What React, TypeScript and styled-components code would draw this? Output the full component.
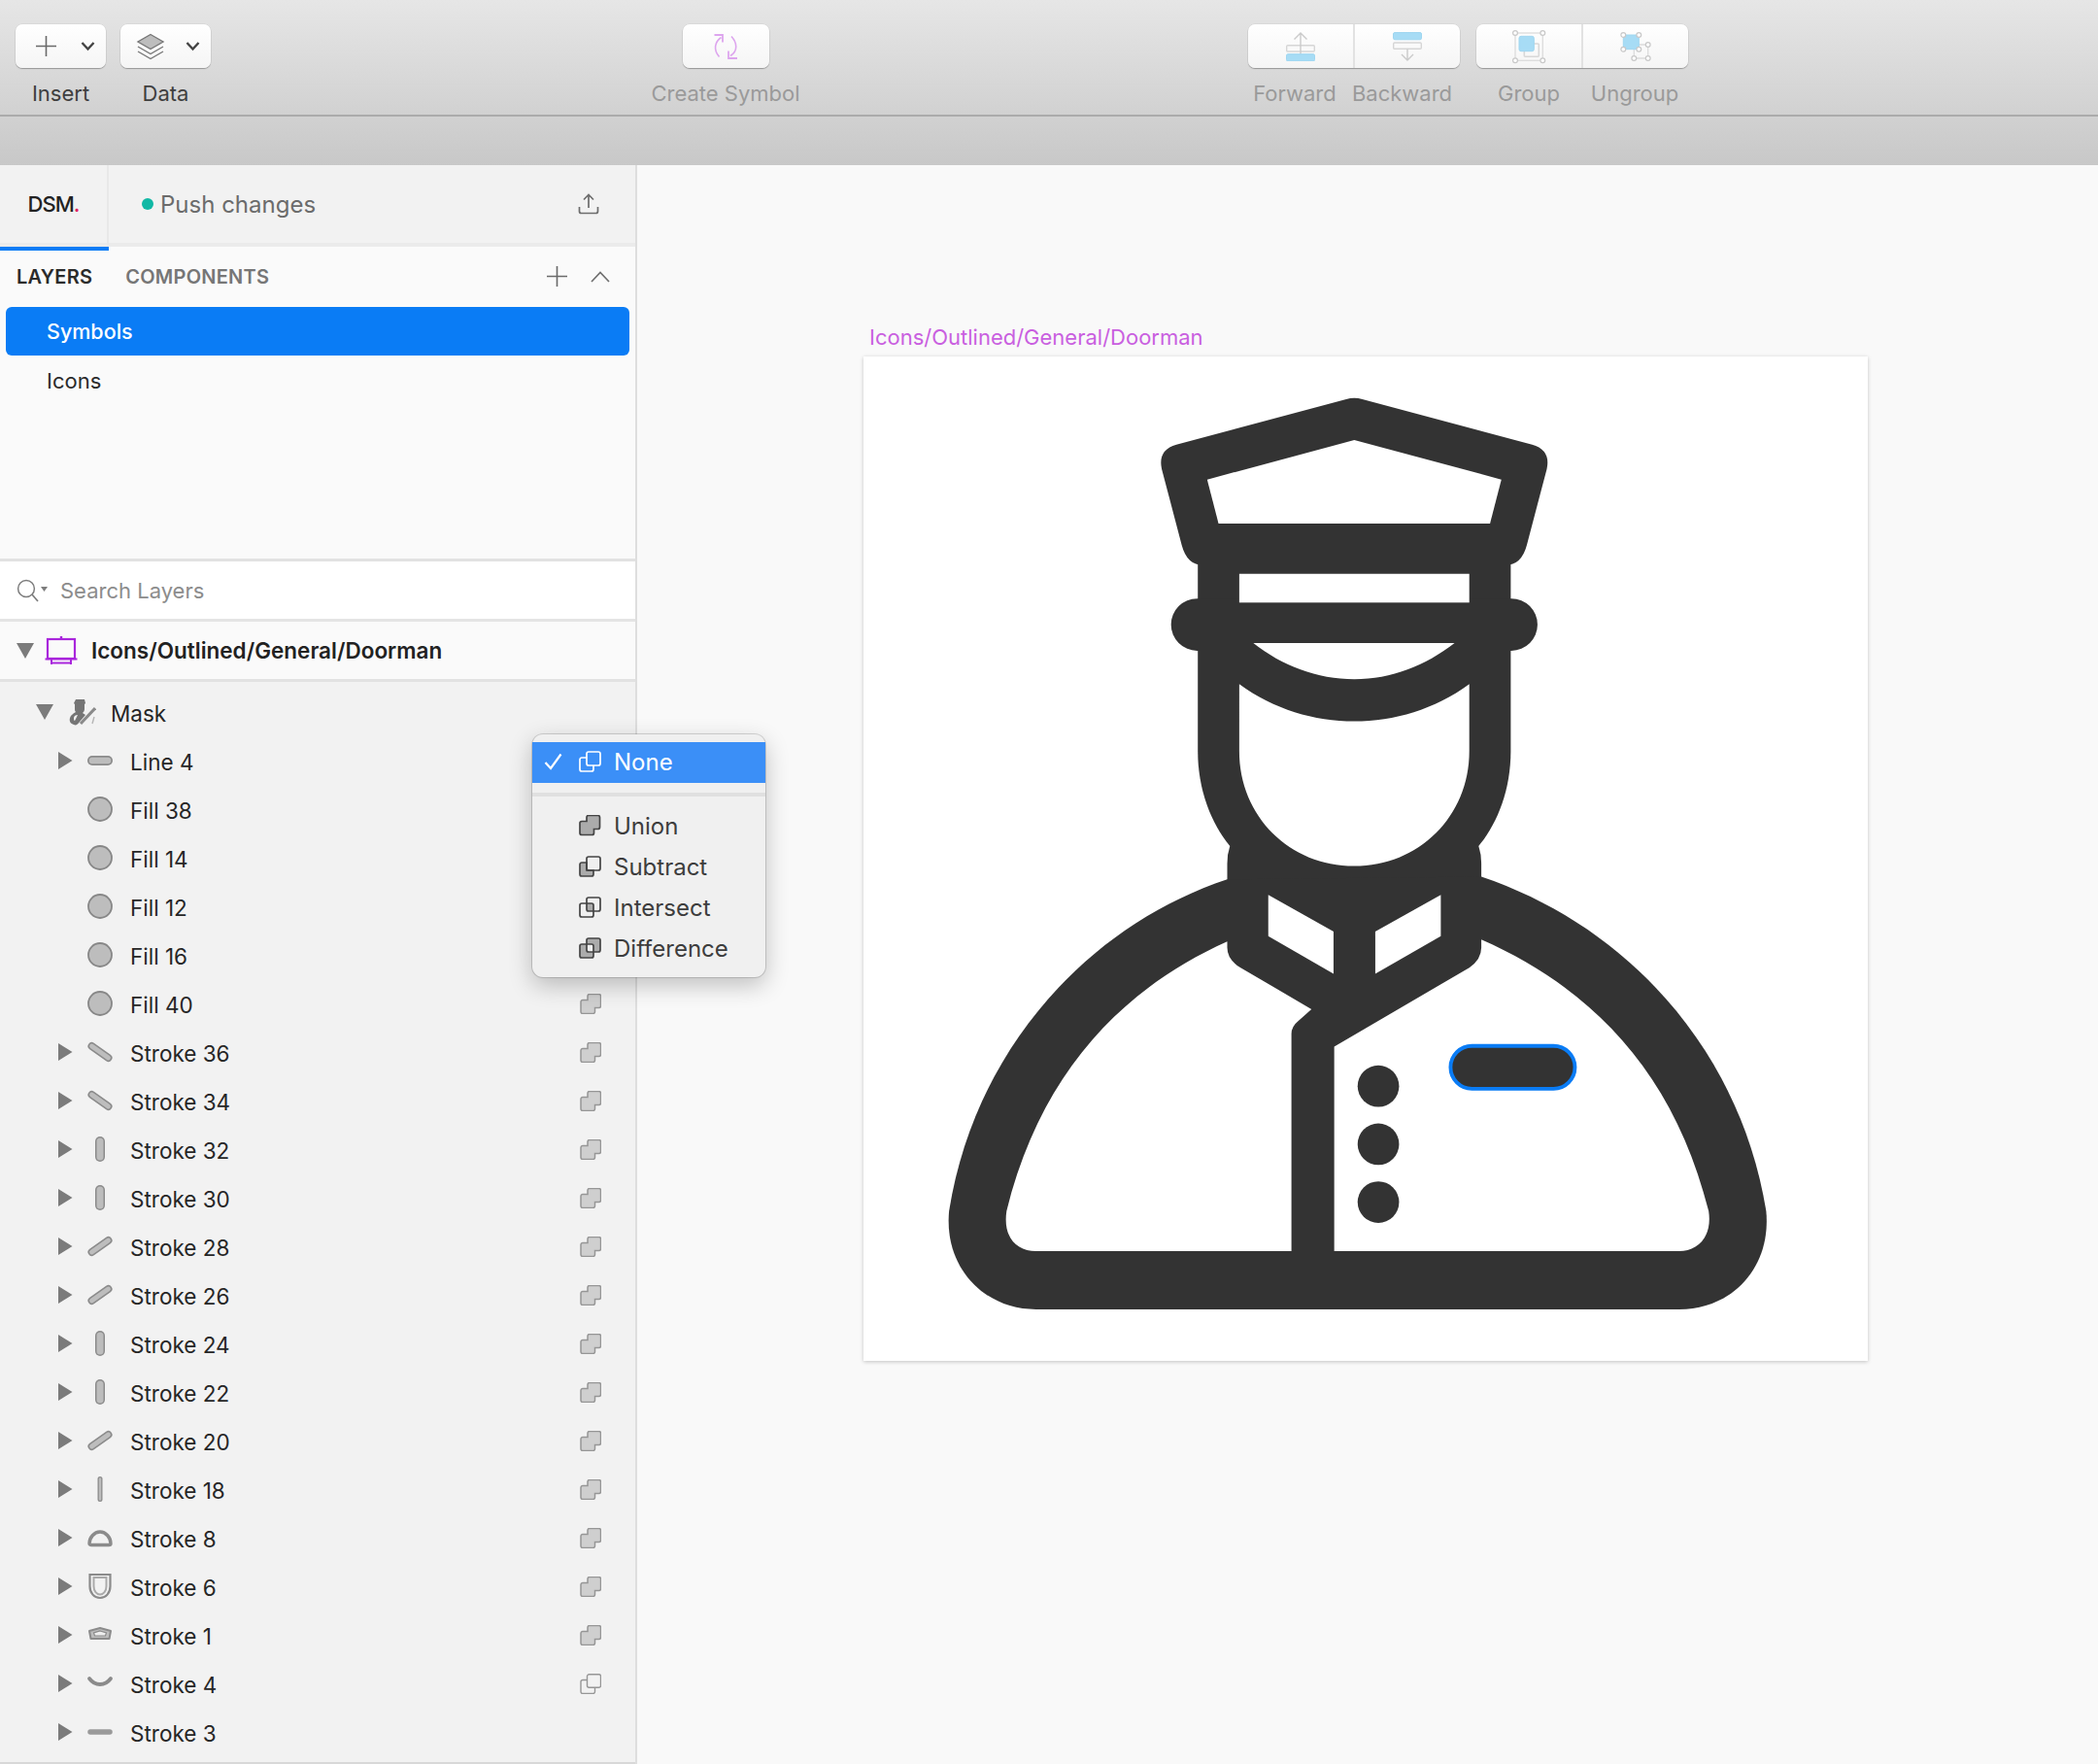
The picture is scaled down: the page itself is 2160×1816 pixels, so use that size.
import React from "react";
import styled, { createGlobalStyle } from "styled-components";

const GlobalStyle = createGlobalStyle`
  html, body {
    margin: 0;
    padding: 0;
    background: #f9f9f9;
    font-family: "Inter", "Liberation Sans", sans-serif;
  }
  * { box-sizing: border-box; }
`;

type Thumb =
  | "bar" | "circle" | "down" | "up" | "vert" | "thin"
  | "dome" | "shield" | "hat" | "smile" | "dash";
type Bool = "union" | "none" | "off";

type Layer = { name: string; thumb: Thumb; bool: Bool; arrow: boolean };

const s = (name: string, thumb: Thumb, bool: Bool = "union"): Layer => ({ name, thumb, bool, arrow: true });
const f = (name: string): Layer => ({ name, thumb: "circle", bool: "union", arrow: false });

const layers: Layer[] = [
  s("Line 4", "bar"),
  f("Fill 38"),
  f("Fill 14"),
  f("Fill 12"),
  f("Fill 16"),
  f("Fill 40"),
  s("Stroke 36", "down"),
  s("Stroke 34", "down"),
  s("Stroke 32", "vert"),
  s("Stroke 30", "vert"),
  s("Stroke 28", "up"),
  s("Stroke 26", "up"),
  s("Stroke 24", "vert"),
  s("Stroke 22", "vert"),
  s("Stroke 20", "up"),
  s("Stroke 18", "thin"),
  s("Stroke 8", "dome"),
  s("Stroke 6", "shield"),
  s("Stroke 1", "hat"),
  s("Stroke 4", "smile", "none"),
  s("Stroke 3", "dash", "off"),
];

const Page = styled.div`
  position: relative;
  width: 2160px;
  height: 1816px;
  overflow: hidden;
  display: flex;
  flex-direction: column;
`;

const TopBar = styled.header`
  height: 170px;
  flex: none;
  background: linear-gradient(#e6e6e6, #c8c8c8);
`;

const ToolRow = styled.div`
  height: 120px;
  border-bottom: 2px solid #ababab;
  display: flex;
  align-items: flex-start;
  padding-top: 25px;
`;

const Tool = styled.div<{ $left: number }>`
  margin-left: ${(p) => p.$left}px;
  display: flex;
  flex-direction: column;
  align-items: center;
`;

const ButtonGroup = styled.div<{ $w: number }>`
  width: ${(p) => p.$w}px;
  height: 45px;
  flex: none;
  display: flex;
  border-radius: 7px;
  background: linear-gradient(#ffffff, #f5f5f5);
  box-shadow: 0 1px 1px rgba(0, 0, 0, 0.28), 0 0 0 0.5px rgba(0, 0, 0, 0.08);
  overflow: hidden;
`;

const ButtonCell = styled.div<{ $divider?: boolean; $pad?: number }>`
  flex: 1;
  display: flex;
  align-items: center;
  justify-content: ${(p) => (p.$pad ? "space-between" : "center")};
  padding: 0 ${(p) => (p.$pad ? "11px" : "0")} 0 ${(p) => p.$pad ?? 0}px;
  border-left: ${(p) => (p.$divider ? "2px solid #e2e2e2" : "none")};
`;

const ToolLabels = styled.div<{ $split?: boolean }>`
  display: flex;
  height: 52px;
  flex: none;
  align-items: center;
  justify-content: ${(p) => (p.$split ? "flex-start" : "center")};
  width: ${(p) => (p.$split ? "100%" : "auto")};
`;

const ToolLabel = styled.span<{ $dim?: boolean; $w?: number }>`
  font-size: 22px;
  line-height: 52px;
  white-space: nowrap;
  text-align: center;
  flex: none;
  width: ${(p) => (p.$w ? `${p.$w}px` : "auto")};
  color: ${(p) => (p.$dim ? "#9a9a9a" : "#3f3f3f")};
`;

const Body = styled.div`
  flex: 1;
  display: flex;
  min-height: 0;
`;

const Sidebar = styled.aside`
  width: 656px;
  flex: none;
  display: flex;
  flex-direction: column;
  border-right: 2px solid #dedede;
  background: #f2f2f2;
`;

const DsmBar = styled.div`
  height: 88px;
  flex: none;
  display: flex;
  background: #f2f2f2;
  border-bottom: 4px solid #fafafa;
  box-shadow: inset 0 -4px 0 #ebebeb;
`;

const DsmTab = styled.div`
  position: relative;
  width: 112px;
  height: 84px;
  flex: none;
  display: flex;
  align-items: center;
  justify-content: center;
  border-right: 2px solid #e8e8e8;
  font-size: 22px;
  font-weight: 500;
  letter-spacing: -1px;
  color: #222;
  padding-bottom: 4px;
  &::after {
    content: "";
    position: absolute;
    left: 0;
    right: -2px;
    bottom: -4px;
    height: 4px;
    background: #0a7cf5;
  }
`;

const RedDot = styled.span`
  color: #e0245e;
`;

const PushRow = styled.div`
  flex: 1;
  display: flex;
  align-items: center;
  padding: 0 37px 4px 34px;
  color: #6b6b6b;
  font-size: 24px;
`;

const StatusDot = styled.span`
  width: 12px;
  height: 12px;
  border-radius: 50%;
  background: #11b8a5;
  margin-right: 7px;
`;

const PushLabel = styled.span`
  flex: 1;
`;

const LayersPane = styled.section`
  height: 320px;
  flex: none;
  background: #fafafa;
  border-bottom: 3px solid #e2e2e2;
`;

const TabRow = styled.div`
  height: 58px;
  display: flex;
  align-items: center;
  padding: 0 26px 5px 17px;
`;

const PaneTab = styled.span<{ $active?: boolean }>`
  font-size: 20px;
  font-weight: 600;
  letter-spacing: 0.25px;
  color: ${(p) => (p.$active ? "#2b2b2b" : "#767676")};
  margin-right: 34px;
`;

const TabActions = styled.div`
  margin-left: auto;
  display: flex;
  align-items: center;
  gap: 23px;
`;

const PageRow = styled.div<{ $active?: boolean }>`
  height: 50px;
  margin: 0 6px;
  padding: ${(p) => (p.$active ? 0 : 2)}px 0 0 42px;
  display: flex;
  align-items: center;
  border-radius: 6px;
  font-size: ${(p) => (p.$active ? 21.5 : 22)}px;
  font-weight: ${(p) => (p.$active ? 500 : 400)};
  color: ${(p) => (p.$active ? "#fff" : "#2b2b2b")};
  background: ${(p) => (p.$active ? "#0a7cf5" : "transparent")};
`;

const SearchRow = styled.div`
  height: 62px;
  flex: none;
  display: flex;
  align-items: center;
  gap: 11px;
  padding-left: 17px;
  background: #fff;
  border-bottom: 3px solid #e4e4e4;
  font-size: 22px;
  color: #8c8c8c;
`;

const ArtboardRow = styled.div`
  height: 62px;
  flex: none;
  display: flex;
  align-items: center;
  padding-left: 17px;
  background: #fafafa;
  border-bottom: 3px solid #e2e2e2;
  font-size: 22.5px;
  font-weight: 600;
  color: #222;
`;

const LayerList = styled.div`
  flex: 1;
  padding-top: 7px;
  border-bottom: 2px solid #d8d8d8;
  min-height: 0;
  overflow: hidden;
`;

const LayerRow = styled.div<{ $indent: number }>`
  height: 50px;
  display: flex;
  align-items: center;
  padding-left: ${(p) => p.$indent}px;
  padding-right: 35px;
  font-size: 22.5px;
  color: #262626;
`;

const Toggle = styled.span<{ $w: number }>`
  width: ${(p) => p.$w}px;
  flex: none;
  display: flex;
  align-items: center;
  margin-bottom: 2px;
`;

const ThumbSlot = styled.span`
  width: 40px;
  flex: none;
  display: flex;
  align-items: center;
  justify-content: center;
  margin-bottom: 2px;
`;

const LayerName = styled.span<{ $gap: number }>`
  flex: 1;
  margin-left: ${(p) => p.$gap}px;
`;

const BoolSlot = styled.span`
  display: flex;
  margin-bottom: 2px;
`;

const Canvas = styled.main`
  flex: 1;
  background: #f9f9f9;
  padding: 164px 0 0 233px;
`;

const ArtboardTitle = styled.div`
  height: 28px;
  margin: 0 0 5px 6px;
  line-height: 26px;
  font-size: 22px;
  color: #c95fe0;
`;

const Artboard = styled.div`
  width: 1034px;
  height: 1034px;
  background: #fff;
  box-shadow: 0 1px 4px rgba(0, 0, 0, 0.22);
`;

const Menu = styled.div`
  position: absolute;
  left: 548px;
  top: 756px;
  width: 240px;
  height: 250px;
  padding-top: 8px;
  border-radius: 11px;
  background: #f0f0f0;
  box-shadow: 0 0 0 1px rgba(0, 0, 0, 0.14), 0 8px 24px rgba(0, 0, 0, 0.24);
`;

const MenuItem = styled.div<{ $active?: boolean }>`
  height: 42px;
  display: flex;
  align-items: center;
  padding-left: 12px;
  padding-bottom: ${(p) => (p.$active ? 2 : 0)}px;
  font-size: 24px;
  color: ${(p) => (p.$active ? "#fff" : "#3d3d3d")};
  background: ${(p) => (p.$active ? "#3b8ff7" : "transparent")};
`;

const MenuCheck = styled.span`
  width: 36px;
  flex: none;
  display: flex;
  align-items: center;
`;

const MenuName = styled.span`
  margin-left: 13px;
`;

const MenuSeparator = styled.div`
  height: 4px;
  margin: 10px 0 9px;
  background: #e0e0e0;
`;

const ArtboardGlyph = styled.svg`
  width: 34px;
  height: 30px;
  flex: none;
  margin: 0 14px 0 11px;
`;

const Triangle = ({ open }: { open?: boolean }) => (
  <svg width="18" height="18" viewBox="0 0 18 18">
    {open ? <path d="M0 1h18L9 17z" fill="#7b7b7b" /> : <path d="M1 0l14.5 9L1 18z" fill="#7b7b7b" />}
  </svg>
);

const Plus = ({ size = 23 }: { size?: number }) => (
  <svg width={size} height={size} viewBox="0 0 23 23">
    <path d="M11.5 1v21M1 11.5h21" stroke="#6a6a6a" strokeWidth="1.6" fill="none" />
  </svg>
);

const ChevronDown = () => (
  <svg width="15" height="11" viewBox="0 0 15 11">
    <path d="M1.5 2l6 6.5 6-6.5" stroke="#444" strokeWidth="2.4" fill="none" />
  </svg>
);

const LayersIcon = () => (
  <svg width="30" height="28" viewBox="0 0 30 28">
    <path d="M15 1.5l13 7.5-13 7.5L2 9z" fill="#bdbdbd" stroke="#777" strokeWidth="1.4" />
    <path d="M2 14l13 7.5L28 14M2 19l13 7.5L28 19" fill="none" stroke="#777" strokeWidth="1.4" />
  </svg>
);

const SymbolIcon = () => (
  <svg width="26" height="26" viewBox="0 0 26 26">
    <path d="M8.5 3.5C2 8 0 16 6.5 23.5" fill="none" stroke="#dda5ee" strokeWidth="1.6" />
    <path d="M19 2.5C25 9 26 17 18 22.5" fill="none" stroke="#dda5ee" strokeWidth="1.6" />
    <path d="M1.5 1h8.5v7.5" fill="none" stroke="#dda5ee" strokeWidth="1.8" />
    <path d="M25 25h-9v-7.500" fill="none" stroke="#dda5ee" strokeWidth="1.8" />
  </svg>
);

const Arrange = ({ forward }: { forward?: boolean }) => (
  <svg width="30" height="30" viewBox="0 0 30 30">
    {forward ? (
      <>
        <rect x="0.7" y="13.7" width="28.6" height="6.3" rx="1" fill="#fafafa" stroke="#d6d6d6" strokeWidth="1.4" />
        <path d="M15 1v22M8.5 7.5L15 1l6.5 6.5" fill="none" stroke="#cacaca" strokeWidth="1.4" />
        <rect x="0.5" y="22.7" width="29" height="7.3" rx="1.5" fill="#a7dcf5" stroke="#9fd6f0" />
      </>
    ) : (
      <>
        <rect x="0.5" y="0.5" width="29" height="7.3" rx="1.5" fill="#a7dcf5" stroke="#9fd6f0" />
        <rect x="0.7" y="11" width="28.6" height="6.3" rx="1" fill="#fafafa" stroke="#d6d6d6" strokeWidth="1.4" />
        <path d="M15 17.5V29M9 23l6 6 6-6" fill="none" stroke="#cacaca" strokeWidth="1.4" />
      </>
    )}
  </svg>
);

const Node = ({ x, y }: { x: number; y: number }) => (
  <circle cx={x} cy={y} r="2.4" fill="#fff" stroke="#c8c8c8" strokeWidth="1.2" />
);

const GroupIcon = () => (
  <svg width="36" height="36" viewBox="0 0 36 36">
    <rect x="4" y="4" width="28.3" height="28.3" fill="none" stroke="#dcdcdc" strokeWidth="1.3" />
    <rect x="13.3" y="15" width="15" height="13.3" rx="1" fill="none" stroke="#d8d8d8" strokeWidth="1.6" />
    <rect x="8" y="7.3" width="15.3" height="15.4" rx="2" fill="#a7dcf5" stroke="#9fd6f0" />
    <Node x={4} y={4} />
    <Node x={32.3} y={4} />
    <Node x={4} y={32.3} />
    <Node x={32.3} y={32.3} />
  </svg>
);

const UngroupIcon = () => (
  <svg width="34" height="34" viewBox="0 0 34 34">
    <path d="M20 15h9.700v14H15.300v-9" fill="none" stroke="#dcdcdc" strokeWidth="1.3" />
    <rect x="4.3" y="5" width="16" height="14.7" rx="2" fill="#a7dcf5" stroke="#9fd6f0" />
    <Node x={4.3} y={5} />
    <Node x={20.3} y={5} />
    <Node x={4.3} y={19.7} />
    <Node x={20.3} y={19.7} />
    <Node x={29.7} y={15} />
    <Node x={15.3} y={29} />
    <Node x={29.7} y={29} />
  </svg>
);

const UploadIcon = () => (
  <svg width="22" height="22" viewBox="0 0 22 22">
    <path d="M11 15V2M6 6.5L11 1.5l5 5" fill="none" stroke="#6d6d6d" strokeWidth="1.7" />
    <path d="M1.5 14v4.5a2 2 0 002 2h15a2 2 0 002-2V14" fill="none" stroke="#6d6d6d" strokeWidth="1.7" />
  </svg>
);

const ChevronUp = () => (
  <svg width="20" height="12" viewBox="0 0 20 12">
    <path d="M1 11l9-9.5 9 9.5" fill="none" stroke="#6f6f6f" strokeWidth="1.7" />
  </svg>
);

const SearchGlyph = () => (
  <svg width="34" height="24" viewBox="0 0 34 24">
    <circle cx="10" cy="10" r="8.4" fill="none" stroke="#7d7d7d" strokeWidth="1.5" />
    <path d="M16 16l6 7" stroke="#7d7d7d" strokeWidth="1.7" />
    <path d="M25 8h7l-3.5 5z" fill="#7d7d7d" />
  </svg>
);

const ArtboardIcon = () => (
  <ArtboardGlyph viewBox="0 0 34 30">
    <path d="M17 0v3" stroke="#a926dc" strokeWidth="2.4" />
    <rect x="3" y="3" width="28" height="20" fill="none" stroke="#a926dc" strokeWidth="2.2" />
    <path d="M0.5 23.5h33M7 23v6M27 23v6M7 27.5h20" fill="none" stroke="#a926dc" strokeWidth="2" />
  </ArtboardGlyph>
);

const MaskIcon = () => (
  <svg width="28" height="27" viewBox="0 0 28 27">
    <path d="M7 0h9l1 4-1 1v5c0 2-1 3-2 4l3 2-6 7c-2 3-4 4-6 3-3-1-5-3-4-7 1-3 3-4 6-6-1-1-1-2-1-3V5L5 4z" fill="#757575" />
    <path d="M5 19c0-2 2-3 4-3l-3 6c-1 0-1-2-1-3z" fill="#f2f2f2" />
    <path d="M27 9L12 25" stroke="#8a8a8a" strokeWidth="3" />
    <path d="M26 18l-2 7" stroke="#b5b5b5" strokeWidth="1.4" />
  </svg>
);

const Stick = ({ d, outer, inner }: { d: string; outer: number; inner: number }) => (
  <>
    <path d={d} fill="none" stroke="#8b8b8b" strokeWidth={outer} strokeLinecap="round" />
    <path d={d} fill="none" stroke="#bdbdbd" strokeWidth={inner} strokeLinecap="round" />
  </>
);

const LayerThumb = ({ kind }: { kind: Thumb }) => (
  <svg width="28" height="28" viewBox="0 0 28 28">
    {kind === "bar" && <Stick d="M6 14h16" outer={10} inner={6.5} />}
    {kind === "circle" && <ellipse cx="14" cy="14" rx="12" ry="12" fill="#bdbdbd" stroke="#878787" strokeWidth="1.8" />}
    {kind === "down" && <Stick d="M5.5 8l17 12" outer={8} inner={4.8} />}
    {kind === "up" && <Stick d="M5.5 20l17-12" outer={8} inner={4.8} />}
    {kind === "vert" && <Stick d="M14 6v16" outer={10} inner={7} />}
    {kind === "thin" && <Stick d="M14 3.5v21" outer={5} inner={2.4} />}
    {kind === "dome" && (
      <path d="M3 20c0-6 5-12 11-12s11 6 11 12c0 1-1 1.5-2 1.5H5c-1 0-2-.5-2-1.5z" fill="none" stroke="#8b8b8b" strokeWidth="3.4" />
    )}
    {kind === "shield" && (
      <>
        <path d="M3.5 2h21v12c0 7-4.500 12-10.500 12S3.500 21 3.500 14z" fill="none" stroke="#8b8b8b" strokeWidth="2.2" />
        <path d="M7.5 5h13v9c0 5-3 8.500-6.500 8.500S7.500 19 7.500 14z" fill="none" stroke="#aaa" strokeWidth="2" />
      </>
    )}
    {kind === "hat" && (
      <>
        <path d="M14 7l11 3-1.5 8h-19L3 10z" fill="#bdbdbd" stroke="#8b8b8b" strokeWidth="2" strokeLinejoin="round" />
        <path d="M14 10l6.5 2-1 3h-11l-1-3z" fill="#eee" stroke="#8b8b8b" strokeWidth="1.2" />
      </>
    )}
    {kind === "smile" && <path d="M3 9c3 4 7 6 11 6s8-2 11-6" fill="none" stroke="#8b8b8b" strokeWidth="3.8" strokeLinecap="round" />}
    {kind === "dash" && <path d="M4 14h20" fill="none" stroke="#9a9a9a" strokeWidth="5.5" strokeLinecap="round" />}
  </svg>
);

const unionPath = "M8 2.5a2 2 0 012-2h9.500a2 2 0 012 2v10a2 2 0 01-2 2H15.500v4a2 2 0 01-2 2H3a2 2 0 01-2-2v-10a2 2 0 012-2h5z";

const BoolIcon = ({ kind }: { kind: Bool }) => (
  <svg width="22" height="21" viewBox="0 0 22 21">
    {kind === "union" && <path d={unionPath} fill="#cfcfcf" stroke="#969696" strokeWidth="1.5" />}
    {kind === "none" && (
      <>
        <rect x="7.5" y="0.8" width="14" height="13.5" rx="2" fill="none" stroke="#969696" strokeWidth="1.4" />
        <path d="M7.5 6.5H3a2 2 0 00-2 2v10a2 2 0 002 2h10.500a2 2 0 002-2v-4" fill="none" stroke="#969696" strokeWidth="1.4" />
      </>
    )}
  </svg>
);

const MenuIcon = ({ kind, color }: { kind: "none" | "union" | "subtract" | "intersect" | "difference"; color: string }) => (
  <svg width="23" height="22" viewBox="0 0 23 22">
    {kind === "union" && <path d={unionPath} fill="#ababab" stroke={color} strokeWidth="1.7" />}
    {kind === "none" && (
      <>
        <rect x="8" y="1" width="14" height="14" rx="2" fill="none" stroke={color} strokeWidth="1.7" />
        <path d="M8 7H3a2 2 0 00-2 2v10a2 2 0 002 2h10a2 2 0 002-2v-4" fill="none" stroke={color} strokeWidth="1.7" />
      </>
    )}
    {kind === "subtract" && (
      <>
        <path d="M8 7H3a2 2 0 00-2 2v10a2 2 0 002 2h10a2 2 0 002-2v-4H8z" fill="#ababab" stroke={color} strokeWidth="1.7" />
        <rect x="8" y="1" width="14" height="14" rx="2" fill="none" stroke={color} strokeWidth="1.7" />
      </>
    )}
    {kind === "intersect" && (
      <>
        <rect x="8" y="7" width="7" height="8" fill="#ababab" />
        <rect x="1" y="7" width="14" height="14" rx="2" fill="none" stroke={color} strokeWidth="1.7" />
        <rect x="8" y="1" width="14" height="14" rx="2" fill="none" stroke={color} strokeWidth="1.7" />
      </>
    )}
    {kind === "difference" && (
      <>
        <rect x="1" y="7" width="14" height="14" rx="2" fill="#ababab" />
        <rect x="8" y="1" width="14" height="14" rx="2" fill="#ababab" />
        <rect x="8" y="7" width="7" height="8" fill="#f0f0f0" />
        <rect x="1" y="7" width="14" height="14" rx="2" fill="none" stroke={color} strokeWidth="1.7" />
        <rect x="8" y="1" width="14" height="14" rx="2" fill="none" stroke={color} strokeWidth="1.7" />
      </>
    )}
  </svg>
);

const Doorman = () => (
  <svg width="1034" height="1034" viewBox="645 266 751 751">
    <g fill="#333">
      <path d="M1006 298q6-2 12 0l127 34q14 4 11 18l-15 57q-4 15-16 15H899q-12 0-16-15l-15-57q-3-14 11-18z" />
      <path d="M895 420v141c0 29 10 54 24 71h186c14-17 24-42 24-71V420z" />
      <rect x="875" y="447" width="274" height="39" rx="19.5" />
      <path d="M919 632q-2 6-2 13v15h190v-15q0-7-2-13z" />
      <path d="M917 657C812 692 728 785 709 905C705 947 735 978.5 774 978.5H1255C1294.6 978.5 1324 947 1320 905C1300.6 785 1216.6 692 1107 655z" />
    </g>
    <g fill="#fff">
      <path d="M1012 328.5l110 29.5-8.5 33H910.5l-8.500-33z" />
      <rect x="926" y="428.5" width="172" height="21.5" />
      <path d="M936.5 480.3H1087c-22 17-47 27-75 27s-54-10-75.500-27z" />
      <path d="M926 511c26 19 56 27.8 86 27.8s60-8.800 86-27.800v50c0 49-38 86-86 86s-86-37-86-86z" />
      <path d="M947.7 668.5L996.5 696v31.500l-48.800-28z" />
      <path d="M1076.7 668.5L1027.7 696v31.500l49-28z" />
      <path d="M917 703.5C840 738 778 800 752 905C749 925 760 935 774 935H965V772.5Q965 767 970 763L980 754L927 723Q917 717 917 708z" />
      <path d="M1107 702C1188.6 738 1250.6 800 1277 905C1280 925 1268 935 1255 935H997V782L1098 723Q1107 717 1107 708z" />
    </g>
    <g fill="#333">
      <circle cx="1030" cy="811.6" r="15.5" />
      <circle cx="1030" cy="855" r="15.5" />
      <circle cx="1030" cy="898.3" r="15.5" />
    </g>
    <rect x="1084" y="781.5" width="93" height="32" rx="16" fill="#333" stroke="#0a7cf5" strokeWidth="2.8" />
  </svg>
);

const CheckMark = () => (
  <svg width="19" height="18" viewBox="0 0 19 18">
    <path d="M1.5 10l5.500 6L17.500 1.500" fill="none" stroke="#fff" strokeWidth="2.2" />
  </svg>
);

const menuItems = [
  ["Union", "union"],
  ["Subtract", "subtract"],
  ["Intersect", "intersect"],
  ["Difference", "difference"],
] as const;

export default function App() {
  return (
    <Page>
      <GlobalStyle />
      <TopBar>
        <ToolRow>
          <Tool $left={16}>
            <ButtonGroup $w={93}>
              <ButtonCell $pad={20}><Plus /><ChevronDown /></ButtonCell>
            </ButtonGroup>
            <ToolLabels><ToolLabel>Insert</ToolLabel></ToolLabels>
          </Tool>
          <Tool $left={15}>
            <ButtonGroup $w={93}>
              <ButtonCell $pad={16}><LayersIcon /><ChevronDown /></ButtonCell>
            </ButtonGroup>
            <ToolLabels><ToolLabel>Data</ToolLabel></ToolLabels>
          </Tool>
          <Tool $left={450}>
            <ButtonGroup $w={89}>
              <ButtonCell><SymbolIcon /></ButtonCell>
            </ButtonGroup>
            <ToolLabels><ToolLabel $dim $w={160}>Create Symbol</ToolLabel></ToolLabels>
          </Tool>
          <Tool $left={456}>
            <ButtonGroup $w={218}>
              <ButtonCell><Arrange forward /></ButtonCell>
              <ButtonCell $divider><Arrange /></ButtonCell>
            </ButtonGroup>
            <ToolLabels $split>
              <ToolLabel $dim $w={100}>Forward</ToolLabel>
              <ToolLabel $dim $w={121}>Backward</ToolLabel>
            </ToolLabels>
          </Tool>
          <Tool $left={16}>
            <ButtonGroup $w={218}>
              <ButtonCell><GroupIcon /></ButtonCell>
              <ButtonCell $divider><UngroupIcon /></ButtonCell>
            </ButtonGroup>
            <ToolLabels $split>
              <ToolLabel $dim $w={108}>Group</ToolLabel>
              <ToolLabel $dim $w={110}>Ungroup</ToolLabel>
            </ToolLabels>
          </Tool>
        </ToolRow>
      </TopBar>
      <Body>
        <Sidebar>
          <DsmBar>
            <DsmTab>DSM<RedDot>.</RedDot></DsmTab>
            <PushRow>
              <StatusDot />
              <PushLabel>Push changes</PushLabel>
              <UploadIcon />
            </PushRow>
          </DsmBar>
          <LayersPane>
            <TabRow>
              <PaneTab $active>LAYERS</PaneTab>
              <PaneTab>COMPONENTS</PaneTab>
              <TabActions>
                <Plus />
                <ChevronUp />
              </TabActions>
            </TabRow>
            <PageRow $active>Symbols</PageRow>
            <PageRow>Icons</PageRow>
          </LayersPane>
          <SearchRow><SearchGlyph />Search Layers</SearchRow>
          <ArtboardRow>
            <Triangle open />
            <ArtboardIcon />
            Icons/Outlined/General/Doorman
          </ArtboardRow>
          <LayerList>
            <LayerRow $indent={37}>
              <Toggle $w={28}><Triangle open /></Toggle>
              <ThumbSlot><MaskIcon /></ThumbSlot>
              <LayerName $gap={9}>Mask</LayerName>
            </LayerRow>
            {layers.map((layer) => (
              <LayerRow key={layer.name} $indent={59}>
                <Toggle $w={24}>{layer.arrow && <Triangle />}</Toggle>
                <ThumbSlot><LayerThumb kind={layer.thumb} /></ThumbSlot>
                <LayerName $gap={11}>{layer.name}</LayerName>
                {layer.bool !== "off" && <BoolSlot><BoolIcon kind={layer.bool} /></BoolSlot>}
              </LayerRow>
            ))}
          </LayerList>
        </Sidebar>
        <Canvas>
          <ArtboardTitle>Icons/Outlined/General/Doorman</ArtboardTitle>
          <Artboard><Doorman /></Artboard>
        </Canvas>
      </Body>
      <Menu>
        <MenuItem $active>
          <MenuCheck><CheckMark /></MenuCheck>
          <MenuIcon kind="none" color="#fff" />
          <MenuName>None</MenuName>
        </MenuItem>
        <MenuSeparator />
        {menuItems.map(([label, kind]) => (
          <MenuItem key={label}>
            <MenuCheck />
            <MenuIcon kind={kind} color="#444" />
            <MenuName>{label}</MenuName>
          </MenuItem>
        ))}
      </Menu>
    </Page>
  );
}
